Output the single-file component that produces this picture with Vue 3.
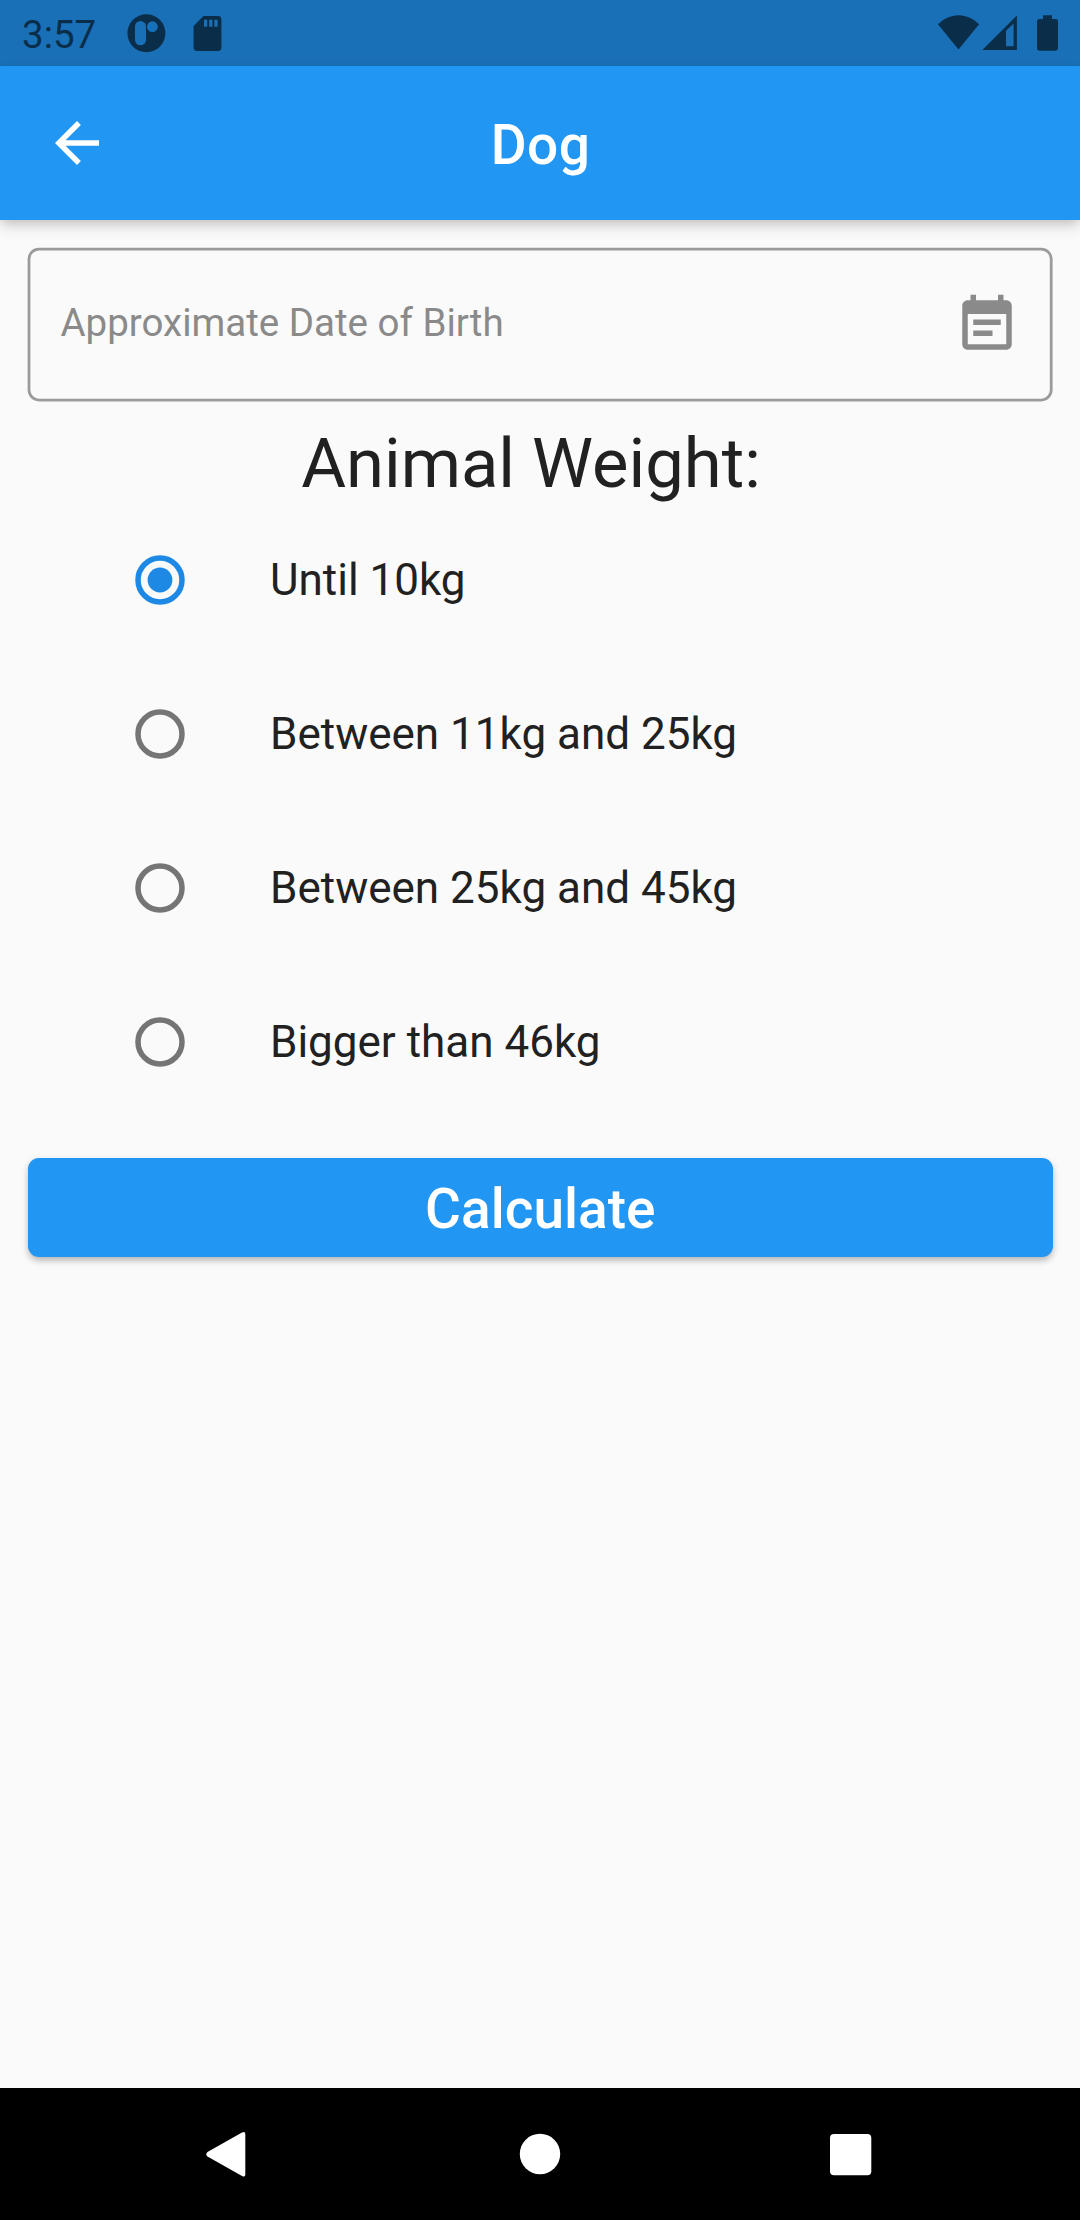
<script setup>
import { ref } from 'vue'

const options = ['Until 10kg', 'Between 11kg and 25kg', 'Between 25kg and 45kg', 'Bigger than 46kg']
const selected = ref(0)
</script>

<template>
  <div class="screen">
    <header class="status">
      <span class="time">3:57</span>
      <svg class="notif" width="40" height="66" viewBox="126 0 40 66">
        <path fill-rule="evenodd" d="M146.4 14.2a19 19 0 1 1 0 38a19 19 0 1 1 0-38zM140.5 21a5.5 5.5 0 0 0-5.5 5.5v13.3a5.5 5.5 0 0 0 11 0V26.500a5.500 5.500 0 0 0-5.500-5.500zM152.400 21.300a5.400 5.400 0 1 0 0 10.800a5.400 5.400 0 1 0 0-10.800z" />
      </svg>
      <svg class="sd" width="30" height="66" viewBox="193 0 30 66">
        <path fill-rule="evenodd" d="M203.500 16H218a3.400 3.400 0 0 1 3.400 3.400V47.500a3.400 3.400 0 0 1-3.400 3.400H197a3.400 3.400 0 0 1-3.400-3.400V26zM204 19.700v7h3.200v-7zM209.200 19.700v7h3.200v-7zM214.400 19.700v7h3.200v-7z" />
      </svg>
      <svg class="signals" width="130" height="66" viewBox="934 0 130 66">
        <path d="M958.500 49.400L937.900 24.300C943.500 18.800 950.500 15.200 958.500 15.200S973.500 18.800 979.100 24.300z" />
        <path fill-rule="evenodd" d="M982.300 50L1016.900 15.400V50zM1006 30.800V46.200H1013.600V23.400z" />
        <path d="M1043 15.300h9v3.800h3.600a2.400 2.400 0 0 1 2.400 2.400v26.800a2.400 2.400 0 0 1-2.400 2.400h-16.200a2.400 2.400 0 0 1-2.400-2.400V21.500a2.400 2.400 0 0 1 2.400-2.400H1043z" />
      </svg>
    </header>

    <div class="appbar">
      <svg class="back" width="66" height="66" viewBox="0 0 24 24">
        <path d="M20 11H7.830l5.590-5.590L12 4l-8 8 8 8 1.410-1.410L7.830 13H20v-2z" />
      </svg>
      <h1 class="title">Dog</h1>
    </div>

    <main class="body">
      <div class="field">
        <svg class="outline" width="1026" height="156" viewBox="27 247 1026 156">
          <rect x="29" y="249" width="1022.200" height="151" rx="10" fill="none" stroke="#9b9b9b" stroke-width="2.750" />
        </svg>
        <span class="hint">Approximate Date of Birth</span>
        <svg class="calendar" width="66" height="66" viewBox="0 0 24 24">
          <path d="M17 10H7v2h10v-2zm2-7h-1V1h-2v2H8V1H6v2H5c-1.110 0-1.990.9-1.990 2L3 19c0 1.100.890 2 2 2h14c1.100 0 2-.9 2-2V5c0-1.100-.9-2-2-2zm0 16H5V8h14v11zm-5-5H7v2h7v-2z" />
        </svg>
      </div>

      <h2 class="heading">Animal Weight:</h2>

      <div class="options">
        <div v-for="(label, i) in options" :key="label" class="option" @click="selected = i">
          <svg class="radio" :class="{ on: selected === i }" width="52" height="52" viewBox="-26 -26 52 52">
            <circle class="ring" r="22" />
            <circle v-if="selected === i" class="dot" r="12.400" />
          </svg>
          <span class="label">{{ label }}</span>
        </div>
      </div>

      <button class="calculate">Calculate</button>
    </main>

    <nav class="nav">
      <svg width="1080" height="132" viewBox="0 2088 1080 132">
        <path d="M207.500 2152L242 2132.600Q245.300 2131 245.300 2134V2174.600Q245.300 2177.700 242 2176L207.500 2156.600Q205 2154.300 207.500 2152z" />
        <circle cx="540" cy="2154" r="20.200" />
        <rect x="830" y="2134" width="41.300" height="41.300" rx="4" />
      </svg>
    </nav>
  </div>
</template>

<style>
body {
  margin: 0;
}
</style>

<style scoped>
.screen {
  display: flex;
  flex-direction: column;
  width: 1080px;
  height: 2220px;
  background: #fafafa;
  color: #212121;
  font-family: Roboto, sans-serif;
  overflow: hidden;
}
svg {
  display: block;
  flex: none;
}
.status {
  display: flex;
  align-items: center;
  height: 66px;
  flex: none;
  box-sizing: border-box;
  padding: 0 16px 0 22px;
  background: #1a70b7;
  fill: #0a2e4a;
  color: #0a2e4a;
}
.time {
  width: 104px;
  font-size: 38.500px;
  line-height: 66px;
  padding-top: 3px;
}
.sd {
  margin-left: 27px;
}
.signals {
  margin-left: auto;
}
.appbar {
  display: grid;
  grid-template-columns: 110px 1fr 110px;
  align-items: center;
  height: 154px;
  flex: none;
  background: #2196f3;
  color: #fff;
  box-shadow: 0 4px 9px -2px rgba(0, 0, 0, 0.14), 0 7px 14px rgba(0, 0, 0, 0.12);
}
.back {
  margin-left: 44px;
  fill: #fff;
}
.title {
  margin: 0;
  padding: 3px 0 0 1px;
  text-align: center;
  font-size: 55px;
  font-weight: 500;
  letter-spacing: 0.400px;
}
.body {
  display: flex;
  flex-direction: column;
  flex: 1;
  padding: 27px 27px 0;
}
.field {
  position: relative;
  display: flex;
  align-items: center;
  justify-content: space-between;
  height: 156px;
  box-sizing: border-box;
  padding: 0 33.500px;
}
.outline {
  position: absolute;
  left: 0;
  top: 0;
}
.hint {
  padding-bottom: 5px;
  font-size: 38.500px;
  color: #8a8a8a;
}
.calendar {
  fill: #8a8a8a;
}
.heading {
  margin: 0 18px 0 0;
  height: 100px;
  line-height: 122px;
  text-align: center;
  font-size: 68.750px;
  font-weight: 400;
}
.option {
  display: flex;
  align-items: center;
  height: 154px;
  padding-left: 106.500px;
}
.ring {
  fill: none;
  stroke: #757575;
  stroke-width: 5.500;
}
.on .ring {
  stroke: #1e88e5;
}
.dot {
  fill: #1e88e5;
}
.label {
  margin-left: 84.500px;
  font-size: 44px;
}
.calculate {
  height: 99px;
  margin: 38.500px 0 0 0.500px;
  border: 0;
  border-radius: 11px;
  padding: 4px 0 0;
  background: #2196f3;
  color: #fff;
  font: 500 55px Roboto, sans-serif;
  box-shadow: 0 4px 6px -1px rgba(0, 0, 0, 0.18), 0 3px 8px rgba(0, 0, 0, 0.14);
}
.nav {
  flex: none;
  height: 132px;
  background: #000;
  fill: #fff;
}
</style>
